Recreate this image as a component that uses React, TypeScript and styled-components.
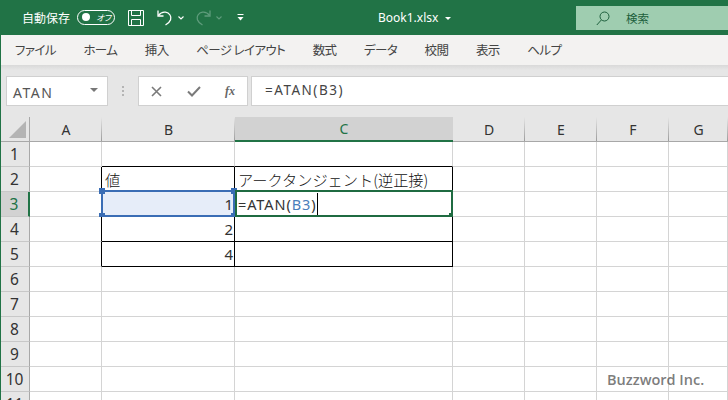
import React from "react";
import styled, { createGlobalStyle } from "styled-components";

const GlobalStyle = createGlobalStyle`
    html, body { margin: 0; padding: 0; background: #fff; }
    #root { width: 728px; height: 400px; overflow: hidden; }
`;

const UI_FONT = `"Noto Sans CJK JP", "Noto Sans", sans-serif`;
const GREEN = "#217346";
const GRID_LINE = "#d4d4d4";

const Window = styled.div`
    position: relative;
    width: 728px;
    height: 400px;
    overflow: hidden;
    display: flex;
    flex-direction: column;
    font-family: ${UI_FONT};
    font-feature-settings: "palt";
    color: #333;
`;

// --- Title bar ---
const TitleBar = styled.header`
    height: 35px;
    flex-shrink: 0;
    background: ${GREEN};
    color: #fff;
    display: flex;
    align-items: flex-start;
`;

const AutoSave = styled.div`
    display: flex;
    align-items: center;
    gap: 7px;
    height: 34px;
    width: 128px;
    padding-left: 22px;
    box-sizing: border-box;
    font-size: 12px;
    flex-shrink: 0;
`;

const Toggle = styled.div`
    width: 38px;
    height: 15px;
    box-sizing: border-box;
    border: 1px solid #fff;
    border-radius: 8px;
    display: flex;
    align-items: center;
    padding-left: 4px;
    gap: 6px;
    flex-shrink: 0;
`;

const ToggleDot = styled.span`
    width: 8px;
    height: 8px;
    border-radius: 50%;
    background: #fff;
`;

const ToggleLabel = styled.span`
    font-size: 8.5px;
    font-style: italic;
    line-height: 1;
`;

const QuickIcons = styled.div`
    display: flex;
    align-items: center;
    height: 35px;
    width: 122px;
    flex-shrink: 0;
`;

const FileName = styled.div`
    width: 326px;
    height: 35px;
    flex-shrink: 0;
    box-sizing: border-box;
    padding-left: 128px;
    display: flex;
    align-items: center;
    gap: 7px;
    font-family: "Noto Sans", sans-serif;
    font-size: 12px;
`;

const TitleCaret = styled.span`
    width: 0;
    height: 0;
    border-left: 3px solid transparent;
    border-right: 3px solid transparent;
    border-top: 3px solid #fff;
    margin-top: 2px;
`;

const SearchBox = styled.div`
    flex: 1;
    height: 24px;
    margin-top: 6px;
    background: #9fcdb0;
    color: #1d5f3c;
    display: flex;
    align-items: center;
    padding-left: 20px;
    gap: 16px;
    font-size: 11.5px;
`;

// --- Menu tabs ---
const MenuBar = styled.nav`
    height: 30px;
    flex-shrink: 0;
    background: #f3f2f1;
    display: flex;
    align-items: center;
    gap: 27.5px;
    padding: 0 0 1px 15px;
    box-sizing: border-box;
    font-size: 12.5px;
    letter-spacing: -0.6px;
    color: #444;
`;

const MenuItem = styled.span`
    white-space: nowrap;
`;

// --- Formula bar ---
const FormulaBar = styled.div`
    height: 52px;
    flex-shrink: 0;
    box-sizing: border-box;
    padding: 11px 0 11px 6px;
    background: linear-gradient(#d9d9d9 0, #e6e6e6 5px);
    display: flex;
    align-items: stretch;
`;

const NameBox = styled.div`
    width: 102px;
    box-sizing: border-box;
    background: #fff;
    border: 1px solid #d0d0d0;
    display: flex;
    align-items: center;
    justify-content: space-between;
    padding: 2px 9px 0 6px;
    font-family: "Noto Sans", sans-serif;
    font-size: 14px;
    letter-spacing: 1.5px;
    color: #555;
`;

const NameCaret = styled.span`
    width: 0;
    height: 0;
    border-left: 4px solid transparent;
    border-right: 4px solid transparent;
    border-top: 4px solid #777;
    margin-top: -4px;
`;

const Grip = styled.div`
    width: 30px;
    display: flex;
    flex-direction: column;
    align-items: center;
    justify-content: center;
    gap: 2px;
`;

const GripDot = styled.span`
    width: 2px;
    height: 2px;
    background: #b4b4b4;
`;

const FuncBox = styled.div`
    width: 110px;
    box-sizing: border-box;
    background: #fff;
    border: 1px solid #d0d0d0;
    display: flex;
    align-items: center;
    justify-content: space-between;
    padding: 0 12px 0 12px;
    margin-right: 3px;
`;

const FxLabel = styled.span`
    font-family: "Liberation Serif", serif;
    font-style: italic;
    font-weight: bold;
    font-size: 12px;
    color: #666;
`;

const FormulaInput = styled.div`
    flex: 1;
    background: #fff;
    border: 1px solid #d0d0d0;
    border-right: none;
    display: flex;
    align-items: center;
    padding: 0 0 3px 13px;
    font-family: "Noto Sans", sans-serif;
    font-size: 13.5px;
    letter-spacing: 1.5px;
    color: #444;
`;

// --- Sheet ---
const Sheet = styled.div`
    flex: 1;
    display: grid;
    grid-template-columns: 30px 72px 133px 218px 72px 72px 72px 59px;
    grid-template-rows: repeat(12, 25px);
    background: #fff;
    font-family: "Noto Sans", sans-serif;
`;

const Corner = styled.div`
    background: #e6e6e6;
    border-right: 1px solid #a8a8a8;
    border-bottom: 1px solid #a8a8a8;
    display: flex;
    align-items: flex-end;
    justify-content: flex-end;
    padding: 0 3px 3px 0;
`;

const ColHeader = styled.div<{ $active?: boolean }>`
    box-sizing: border-box;
    display: flex;
    align-items: center;
    justify-content: center;
    font-size: 14px;
    background: ${({ $active }) =>
        $active ? "#d2d2d2" : "linear-gradient(#e6e6e6, #9c9c9c) right / 1px 100% no-repeat #e6e6e6"};
    color: ${({ $active }) => ($active ? GREEN : "#333")};
    border-bottom: ${({ $active }) => ($active ? `2px solid ${GREEN}` : "1px solid #a8a8a8")};
`;

const RowHeader = styled.div<{ $active?: boolean }>`
    box-sizing: border-box;
    display: flex;
    align-items: center;
    justify-content: center;
    font-size: 15.5px;
    background: ${({ $active }) => ($active ? "#d2d2d2" : "#e6e6e6")};
    color: ${({ $active }) => ($active ? GREEN : "#333")};
    border-right: ${({ $active }) => ($active ? `2px solid ${GREEN}` : "1px solid #a8a8a8")};
    border-bottom: 1px solid #c8c8c8;
`;

const Cell = styled.div<{ $right?: boolean; $bottom?: boolean; $fill?: boolean; $end?: boolean }>`
    position: relative;
    box-sizing: border-box;
    border-right: 1px solid ${({ $right }) => ($right ? "#000" : GRID_LINE)};
    border-bottom: 1px solid ${({ $bottom }) => ($bottom ? "#000" : GRID_LINE)};
    background: ${({ $fill }) => ($fill ? "#e6edf9" : "#fff")};
    display: flex;
    align-items: center;
    justify-content: ${({ $end }) => ($end ? "flex-end" : "flex-start")};
    padding: 0 1px 0 3px;
    font-family: "Noto Sans CJK JP", sans-serif;
    font-feature-settings: normal;
    font-weight: 300;
    font-size: 15.2px;
    color: #111;
    white-space: nowrap;
`;

const NumberText = styled.span`
    font-family: "Noto Sans", sans-serif;
    font-weight: 400;
    font-size: 15px;
    color: #333;
`;

const FormulaText = styled.span`
    font-family: "Noto Sans", sans-serif;
    font-weight: 400;
    font-size: 14.5px;
    letter-spacing: 0.9px;
    color: #333;
`;

const RefText = styled.span`
    color: #4a7ebb;
`;

const TextCaret = styled.span`
    width: 1px;
    height: 22px;
    background: #000;
    margin-left: 1px;
`;

const Selection = styled.div<{ $color: string; $left: number; $right: number }>`
    position: absolute;
    left: ${({ $left }) => $left}px;
    right: ${({ $right }) => $right}px;
    top: -2px;
    bottom: -1px;
    border: 2px solid ${({ $color }) => $color};
    pointer-events: none;
`;

const Handle = styled.span<{ $color: string; $x: "l" | "r"; $y: "t" | "b" }>`
    position: absolute;
    width: 6px;
    height: 6px;
    background: ${({ $color }) => $color};
    ${({ $x }) => ($x === "l" ? "left: -4px;" : "right: -4px;")}
    ${({ $y }) => ($y === "t" ? "top: -4px;" : "bottom: -4px;")}
`;

const Watermark = styled.div`
    position: absolute;
    left: 607px;
    top: 370px;
    font-family: "Open Sans", sans-serif;
    font-weight: 600;
    font-size: 14.5px;
    color: rgba(90, 90, 90, 0.8);
`;

const LeftEdge = styled.div`
    position: absolute;
    left: 0;
    top: 35px;
    bottom: 0;
    width: 1px;
    background: ${GREEN};
`;

// --- Icons ---
const SaveIcon = () => (
    <svg width="16" height="16" viewBox="0 0 16 16" fill="none" stroke="#fff" strokeWidth="1" style={{ marginRight: 13 }}>
        <path d="M0.5 0.5H15.5V15.5H0.5Z" />
        <path d="M3.5 0.5V5.5H12.5V0.5" />
        <path d="M3.5 15.5V9.5H12.5V15.5" />
    </svg>
);

const UndoIcon = ({ color }: { color: string }) => (
    <svg width="16" height="17" viewBox="0 0 16 17" fill="none" stroke={color} strokeWidth="1.3">
        <path d="M1 1.5V7H6.5" />
        <path d="M1.3 6.5C3.5 3.8 6 2.8 8.5 3.2C12.5 3.8 14.8 7.5 13.6 10.8C13 12.6 11.2 14.4 8.5 16" />
    </svg>
);

const RedoIcon = ({ color }: { color: string }) => (
    <svg width="16" height="17" viewBox="0 0 16 17" fill="none" stroke={color} strokeWidth="1.3">
        <path d="M15 1.5V7H9.5" />
        <path d="M14.7 6.5C12.5 3.8 10 2.8 7.5 3.2C3.5 3.8 1.2 7.5 2.4 10.8C3 12.6 4.8 14.4 7.5 16" />
    </svg>
);

const Chevron = ({ color, gap }: { color: string; gap: number }) => (
    <svg width="6" height="4" viewBox="0 0 6 4" fill="none" stroke={color} strokeWidth="1.1" style={{ marginLeft: 5, marginRight: gap }}>
        <path d="M0.5 0.5L3 3L5.5 0.5" />
    </svg>
);

const CustomizeIcon = () => (
    <svg width="7" height="7" viewBox="0 0 7 7" fill="#fff">
        <rect x="0.5" y="0" width="6" height="1" />
        <path d="M0.5 3H6.5L3.5 6.5Z" />
    </svg>
);

const SearchIcon = () => (
    <svg width="14" height="15" viewBox="0 0 14 15" fill="none" stroke="#1d5f3c" strokeWidth="1">
        <circle cx="8.5" cy="5.5" r="4.5" />
        <path d="M5.3 9L0.8 14" />
    </svg>
);

const CancelIcon = () => (
    <svg width="11" height="11" viewBox="0 0 11 11" fill="none" stroke="#7a7a7a" strokeWidth="1.6">
        <path d="M1 1L10 10M10 1L1 10" />
    </svg>
);

const CheckIcon = () => (
    <svg width="14" height="11" viewBox="0 0 14 11" fill="none" stroke="#7a7a7a" strokeWidth="2">
        <path d="M1 5.5L5 9.5L13 1" />
    </svg>
);

const CornerMark = () => (
    <svg width="17" height="17" viewBox="0 0 17 17">
        <path d="M17 0V17H0Z" fill="#b4b4b4" />
    </svg>
);

const COLUMNS = ["A", "B", "C", "D", "E", "F", "G"];
const ROWS = [1, 2, 3, 4, 5, 6, 7, 8, 9, 10, 11];
const TABS = ["ファイル", "ホーム", "挿入", "ページ レイアウト", "数式", "データ", "校閲", "表示", "ヘルプ"];
const VALUES: Record<number, string> = { 3: "1", 4: "2", 5: "4" };

const SheetCell: React.FC<{ col: string; row: number }> = ({ col, row }) => {
    const inTable = row >= 2 && row <= 5;
    const right = (col === "A" || col === "B" || col === "C") && inTable;
    const bottom = (col === "B" || col === "C") && row >= 1 && row <= 5;

    if (col === "B" && row === 3) {
        return (
            <Cell $right $bottom $fill $end>
                <NumberText>1</NumberText>
                <Selection $color="#3a6db5" $left={-1} $right={-1}>
                    <Handle $color="#3a6db5" $x="l" $y="t" />
                    <Handle $color="#3a6db5" $x="r" $y="t" />
                    <Handle $color="#3a6db5" $x="l" $y="b" />
                    <Handle $color="#3a6db5" $x="r" $y="b" />
                </Selection>
            </Cell>
        );
    }
    if (col === "C" && row === 3) {
        return (
            <Cell $right $bottom>
                <FormulaText>=ATAN(<RefText>B3</RefText>)</FormulaText>
                <TextCaret />
                <Selection $color="#1f6b41" $left={0} $right={-1}>
                    <Handle $color="#1f6b41" $x="r" $y="b" />
                </Selection>
            </Cell>
        );
    }
    return (
        <Cell $right={right} $bottom={bottom} $end={col === "B" && row > 3}>
            {col === "B" && VALUES[row] && <NumberText>{VALUES[row]}</NumberText>}
            {col === "B" && row === 2 && "値"}
            {col === "C" && row === 2 && "アークタンジェント(逆正接)"}
        </Cell>
    );
};

export default function App() {
    return (
        <Window>
            <GlobalStyle />
            <TitleBar>
                <AutoSave>
                    自動保存
                    <Toggle>
                        <ToggleDot />
                        <ToggleLabel>オフ</ToggleLabel>
                    </Toggle>
                </AutoSave>
                <QuickIcons>
                    <SaveIcon />
                    <UndoIcon color="#fff" />
                    <Chevron color="#fff" gap={11} />
                    <RedoIcon color="#5f9c7c" />
                    <Chevron color="#5f9c7c" gap={15} />
                    <CustomizeIcon />
                </QuickIcons>
                <FileName>
                    Book1.xlsx
                    <TitleCaret />
                </FileName>
                <SearchBox>
                    <SearchIcon />
                    検索
                </SearchBox>
            </TitleBar>

            <MenuBar>
                {TABS.map((tab) => (
                    <MenuItem key={tab}>{tab}</MenuItem>
                ))}
            </MenuBar>

            <FormulaBar>
                <NameBox>
                    ATAN
                    <NameCaret />
                </NameBox>
                <Grip>
                    <GripDot />
                    <GripDot />
                    <GripDot />
                </Grip>
                <FuncBox>
                    <CancelIcon />
                    <CheckIcon />
                    <FxLabel>fx</FxLabel>
                </FuncBox>
                <FormulaInput>=ATAN(B3)</FormulaInput>
            </FormulaBar>

            <Sheet>
                <Corner>
                    <CornerMark />
                </Corner>
                {COLUMNS.map((col) => (
                    <ColHeader key={col} $active={col === "C"}>
                        {col}
                    </ColHeader>
                ))}
                {ROWS.map((row) => (
                    <React.Fragment key={row}>
                        <RowHeader $active={row === 3}>{row}</RowHeader>
                        {COLUMNS.map((col) => (
                            <SheetCell key={col} col={col} row={row} />
                        ))}
                    </React.Fragment>
                ))}
            </Sheet>

            <LeftEdge />
            <Watermark>Buzzword Inc.</Watermark>
        </Window>
    );
}
